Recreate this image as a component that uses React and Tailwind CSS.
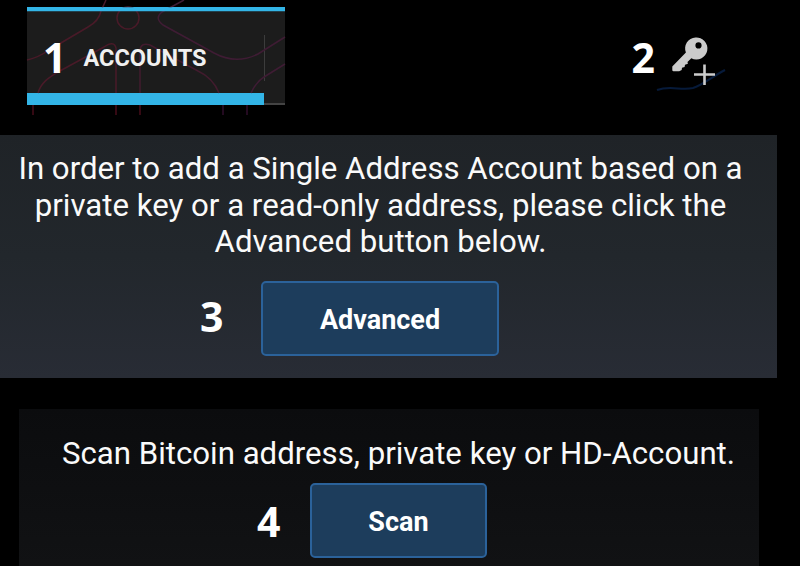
import React from "react";

function Step({ children, className = "" }) {
  return (
    <span className={`font-['Open_Sans',sans-serif] text-[41px] leading-[40px] font-bold text-white ${className}`}>
      {children}
    </span>
  );
}

function ActionButton({ children, className = "" }) {
  return (
    <button
      className={`flex h-[75px] items-center justify-center rounded-[5px] border-2 border-[#2b629a] bg-[#1d3d5c] pt-[3px] text-[27px] font-bold text-white ${className}`}
    >
      {children}
    </button>
  );
}

function BackgroundLines() {
  return (
    <svg className="pointer-events-none absolute inset-0" width="800" height="134" fill="none" strokeWidth="1.5">
      <g stroke="#491a28">
        <path d="M27 60C36 58 42 55 49 50L88 27Q99 21 101 11L106 0" />
        <path d="M38 93C41 82 50 77 58 72L104 47Q114 40 116 48V93" />
        <path d="M140 93V50Q141 42 150 45L198 71Q213 78 219 93" stroke="#421b2e" />
        <circle cx="128" cy="18" r="11" />
      </g>
      <g stroke="#3f1c34">
        <path d="M184 0L162 12Q154 18 163 25L214 53Q236 65 258 54L285 37" />
        <path d="M251 93Q256 82 264 77L285 64" />
      </g>
      <g stroke="#350913" strokeWidth="2">
        <path d="M33 105V115M116 105V115M140 105V115" />
        <path d="M223 105V115M247 105V115" stroke="#230a20" />
      </g>
      <path d="M27 9.300H285" stroke="#33b5e7" strokeWidth="4" />
      <path d="M657 90C671 85 681 91 693 88C703 85 710 78 725 70" stroke="#061a3a" strokeWidth="2" />
    </svg>
  );
}

function KeyPlusIcon() {
  return (
    <svg className="relative" width="44" height="50" viewBox="672 36 44 50">
      <path
        fill="#cbcbcb"
        fillRule="evenodd"
        d="M695.5 37.5a11 11 0 1 1-4.2 20.7l-3.8 3.8.4 1.7-2.9 1-.4 2.4-2.6.7-.3 2.2-2.5 1.2H673.500q-1.200 0-1.200-1.200v-3.600l13.600-13.800A11 11 0 0 1 695.500 37.500ZM698.500 42.300a3.100 3.100 0 1 0 0 6.200 3.100 3.100 0 0 0 0-6.200Z"
      />
      <path d="M704.500 64.500V85M694 74.500H715" stroke="#cbcbcb" strokeWidth="2.600" />
    </svg>
  );
}

export default function App() {
  return (
    <main className="flex h-[566px] w-[800px] flex-col overflow-hidden bg-black font-[Roboto,sans-serif] text-[#fafafa]">
      <header className="relative flex h-[135px] shrink-0 items-start justify-between pt-[7px] pr-[84px] pl-[27px]">
        <div className="flex h-[98px] w-[258px] flex-col border-t-[4px] border-[#33b5e7] bg-[#1c1c1c]">
          <div className="flex flex-1 items-center pt-[12px]">
            <Step className="relative z-10 ml-[16px] -mt-[2px]">1</Step>
            <span className="relative z-10 ml-[17px] pt-[2px] text-[23.5px] font-bold whitespace-nowrap text-[#f0f0f0]">ACCOUNTS</span>
            <i className="mr-[20px] ml-auto h-[46px] w-px bg-[#3c3c3c]" />
          </div>
          <div className="flex h-[12px] items-end">
            <i className="h-full w-[237px] bg-[#33b5e7]" />
            <i className="h-[2px] flex-1 bg-[#444444]" />
          </div>
        </div>
        <BackgroundLines />
        <div className="mt-[29px] flex items-start gap-[17px]">
          <Step className="relative mt-px">2</Step>
          <KeyPlusIcon />
        </div>
      </header>

      <section className="flex h-[243px] w-[777px] shrink-0 flex-col bg-linear-to-b from-[#1f2327] via-[#22272c] to-[#282c35] pt-[16px]">
        <p className="w-[761px] text-center text-[31.2px] leading-[36.6px] whitespace-nowrap">
          In order to add a Single Address Account based on a
          <br />
          private key or a read-only address, please click the
          <br />
          Advanced button below.
        </p>
        <div className="mt-[20px] flex items-center pl-[200px]">
          <Step className="-mt-[4px] w-[61px]">3</Step>
          <ActionButton className="w-[238px]">Advanced</ActionButton>
        </div>
      </section>

      <section className="mt-[31px] ml-[19px] flex h-[157px] w-[740px] shrink-0 flex-col bg-linear-to-b from-[#0b0c0e] to-[#111214] pt-[26px]">
        <p className="pl-[43px] text-[31.2px] leading-[37px] whitespace-nowrap">
          Scan Bitcoin address, private key or HD-Account.
        </p>
        <div className="mt-[11px] flex items-center pl-[238px]">
          <Step className="w-[53px]">4</Step>
          <ActionButton className="w-[177px]">Scan</ActionButton>
        </div>
      </section>
    </main>
  );
}
